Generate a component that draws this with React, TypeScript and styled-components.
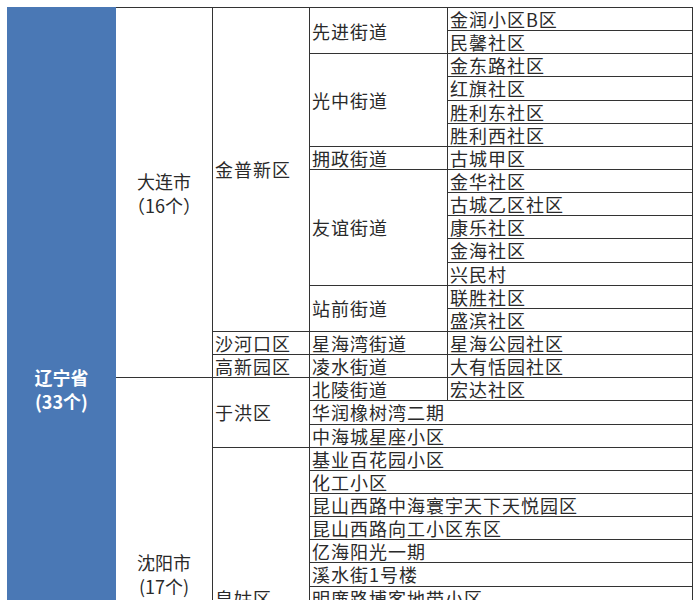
import React from 'react'
import styled, { createGlobalStyle } from 'styled-components'

const GlobalStyle = createGlobalStyle`
  html, body {
    margin: 0;
    padding: 0;
    background: #ffffff;
    overflow: hidden;
  }
  body {
    font-family: "Noto Sans CJK SC", "Noto Sans", sans-serif;
  }
`;

const Page = styled.div`
  height: 600px;
  overflow: hidden;
  padding: 7px 0 0 7px;
  box-sizing: border-box;
`;

const Table = styled.table`
  width: 685px;
  table-layout: fixed;
  border-collapse: collapse;
  border-right: 1px solid #9a9a9a;
  color: #2a2a2a;
  font-size: 18px;
  letter-spacing: 1px;
`;

const Col = styled.col<{ $w: number }>`
  width: ${p => p.$w}px;
`;

const Row = styled.tr`
  height: 23.15px;
`;

const Cell = styled.td`
  border: 1px solid #333333;
  padding: 0 0 0 2px;
  line-height: 22px;
  white-space: nowrap;
  vertical-align: middle;
  text-align: left;
`;

const Province = styled.td`
  background: #4a78b5;
  border: 1px solid #4a78b5;
  color: #ffffff;
  font-weight: 700;
  text-align: center;
  vertical-align: middle;
  line-height: 24px;
  letter-spacing: 0;
  padding-top: 0;
`;

const City = styled(Cell)`
  text-align: center;
  line-height: 24px;
  letter-spacing: 0;
  padding: 0;
`;

type Street = { name?: string; comms: string[] };
type District = { name: string; streets: Street[] };
type CityData = { name: string; count: string; districts: District[] };

const blanks = (n: number) => Array.from({ length: n }, () => ({ comms: [''] }));

const columns = [108, 97, 97, 138, 245];

const data: CityData[] = [
  {
    name: '大连市',
    count: '（16个）',
    districts: [
      {
        name: '金普新区',
        streets: [
          { name: '先进街道', comms: ['金润小区B区', '民馨社区'] },
          { name: '光中街道', comms: ['金东路社区', '红旗社区', '胜利东社区', '胜利西社区'] },
          { name: '拥政街道', comms: ['古城甲区'] },
          { name: '友谊街道', comms: ['金华社区', '古城乙区社区', '康乐社区', '金海社区', '兴民村'] },
          { name: '站前街道', comms: ['联胜社区', '盛滨社区'] },
        ],
      },
      { name: '沙河口区', streets: [{ name: '星海湾街道', comms: ['星海公园社区'] }] },
      { name: '高新园区', streets: [{ name: '凌水街道', comms: ['大有恬园社区'] }] },
    ],
  },
  {
    name: '沈阳市',
    count: '(17个)',
    districts: [
      {
        name: '于洪区',
        streets: [
          { name: '北陵街道', comms: ['宏达社区'] },
          { comms: ['华润橡树湾二期'] },
          { comms: ['中海城星座小区'] },
        ],
      },
      {
        name: '皇姑区',
        streets: [
          { comms: ['基业百花园小区'] },
          { comms: ['化工小区'] },
          { comms: ['昆山西路中海寰宇天下天悦园区'] },
          { comms: ['昆山西路向工小区东区'] },
          { comms: ['亿海阳光一期'] },
          { comms: ['溪水街1号楼'] },
          { comms: ['明廉路博客地带小区'] },
          ...blanks(6),
        ],
      },
      { name: '', streets: blanks(1) },
    ],
  },
];

const countRows = (d: District) => d.streets.reduce((n, s) => n + s.comms.length, 0);

const buildRows = () => {
  const rows: React.ReactNode[][] = [];
  const total = data.reduce((n, c) => n + c.districts.reduce((m, d) => m + countRows(d), 0), 0);
  data.forEach(city => {
    const cityRows = city.districts.reduce((m, d) => m + countRows(d), 0);
    let firstOfCity = true;
    city.districts.forEach(district => {
      let firstOfDistrict = true;
      district.streets.forEach(street => {
        street.comms.forEach((comm, ki) => {
          const cells: React.ReactNode[] = [];
          if (rows.length === 0) {
            cells.push(
              <Province key="p" rowSpan={total}>
                辽宁省
                <br />
                (33个)
              </Province>
            );
          }
          if (firstOfCity) {
            cells.push(
              <City key="c" rowSpan={cityRows}>
                {city.name}
                <br />
                {city.count}
              </City>
            );
            firstOfCity = false;
          }
          if (firstOfDistrict) {
            cells.push(
              <Cell key="d" rowSpan={countRows(district)}>
                {district.name}
              </Cell>
            );
            firstOfDistrict = false;
          }
          if (street.name) {
            if (ki === 0) {
              cells.push(
                <Cell key="s" rowSpan={street.comms.length}>
                  {street.name}
                </Cell>
              );
            }
            cells.push(<Cell key="k">{comm}</Cell>);
          } else {
            cells.push(
              <Cell key="k" colSpan={2}>
                {comm}
              </Cell>
            );
          }
          rows.push(cells);
        });
      });
    });
  });
  return rows;
};

export default function App() {
  const rows = buildRows();
  return (
    <>
      <GlobalStyle />
      <Page>
        <Table>
          <colgroup>
            {columns.map((w, i) => (
              <Col key={i} $w={w} />
            ))}
          </colgroup>
          <tbody>
            {rows.map((cells, i) => (
              <Row key={i}>{cells}</Row>
            ))}
          </tbody>
        </Table>
      </Page>
    </>
  );
}
